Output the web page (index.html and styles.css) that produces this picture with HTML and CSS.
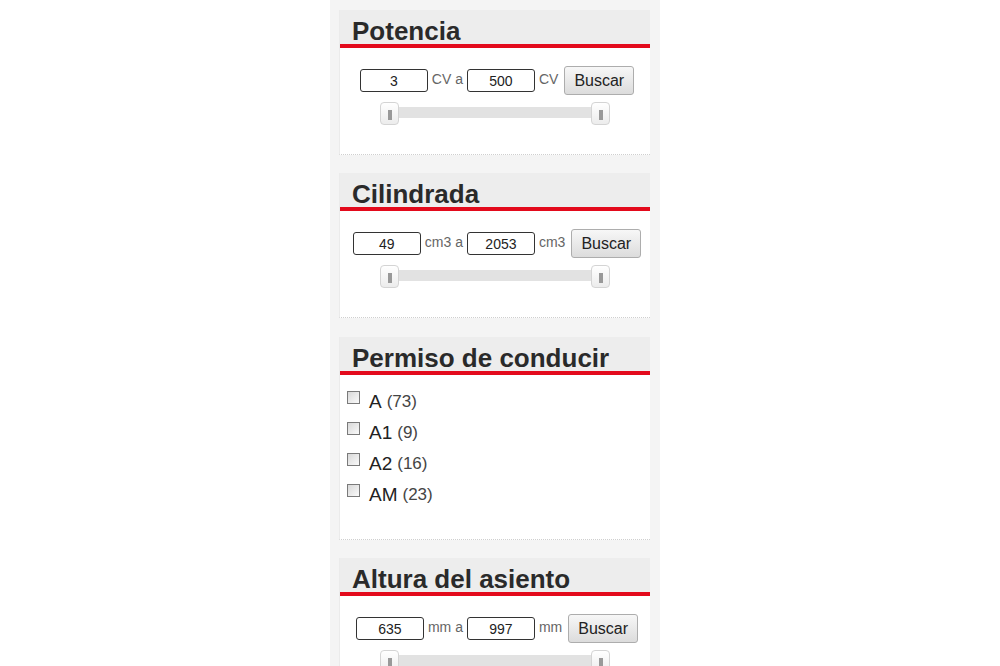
FILE: index.html
```html
<!DOCTYPE html>
<html lang="es">
<head>
    <meta charset="UTF-8">
    <meta name="viewport" content="width=device-width, initial-scale=1.0">
    <title>Filtros</title>
    <link rel="stylesheet" href="styles.css">
</head>
<body>
    <aside class="filtros">

        <!-- Potencia -->
        <section class="filtro">
            <h2>Potencia</h2>
            <div class="rango">
                <div class="rango-campos">
                    <input type="text" value="3">
                    <span class="unidad">CV a</span>
                    <input type="text" value="500">
                    <span class="unidad">CV</span>
                    <button type="button">Buscar</button>
                </div>
                <div class="deslizador">
                    <span class="tirador izq"><i></i></span>
                    <span class="tirador der"><i></i></span>
                </div>
            </div>
        </section>

        <!-- Cilindrada -->
        <section class="filtro">
            <h2>Cilindrada</h2>
            <div class="rango">
                <div class="rango-campos">
                    <input type="text" value="49">
                    <span class="unidad">cm3 a</span>
                    <input type="text" value="2053">
                    <span class="unidad">cm3</span>
                    <button type="button">Buscar</button>
                </div>
                <div class="deslizador">
                    <span class="tirador izq"><i></i></span>
                    <span class="tirador der"><i></i></span>
                </div>
            </div>
        </section>

        <!-- Permiso -->
        <section class="filtro filtro-permiso">
            <h2>Permiso de conducir</h2>
            <ul class="opciones">
                <li><label><input type="checkbox">A<span class="cuenta">(73)</span></label></li>
                <li><label><input type="checkbox">A1<span class="cuenta">(9)</span></label></li>
                <li><label><input type="checkbox">A2<span class="cuenta">(16)</span></label></li>
                <li><label><input type="checkbox">AM<span class="cuenta">(23)</span></label></li>
            </ul>
        </section>

        <!-- Altura del asiento -->
        <section class="filtro">
            <h2>Altura del asiento</h2>
            <div class="rango">
                <div class="rango-campos">
                    <input type="text" value="635">
                    <span class="unidad">mm a</span>
                    <input type="text" value="997">
                    <span class="unidad">mm</span>
                    <button type="button">Buscar</button>
                </div>
                <div class="deslizador">
                    <span class="tirador izq"><i></i></span>
                    <span class="tirador der"><i></i></span>
                </div>
            </div>
        </section>

    </aside>
</body>
</html>
```

FILE: styles.css
```css
/* Basis */
body {
    margin: 0;
    padding: 0;
    background: #fff;
    font-family: "Liberation Sans", Arial, sans-serif;
    color: #222;
}

.filtros {
    width: 330px;
    min-height: 100vh;
    margin-left: 330px;
    padding: 10px 0 0 0;
    box-sizing: border-box;
    background: #f4f4f4;
    overflow: hidden;
}

.filtro {
    width: 311px;
    margin: 0 10px 18px 9px;
    background: #fff;
    border-left: 1px solid #ebebeb;
    border-bottom: 1px dotted #cfcfcf;
    box-sizing: border-box;
}

.filtro-permiso {
    margin-top: 19px;
}

.filtro h2 {
    margin: 0;
    height: 38px;
    padding: 8px 0 0 12px;
    box-sizing: border-box;
    font-size: 26px;
    line-height: 26px;
    font-weight: bold;
    color: #2a2a2a;
    background: #ededed;
    border-bottom: 4px solid #e30a1c;
}

/* Rango met invoervelden */
.rango {
    padding: 18px 0 36px 0;
}

.rango-campos {
    display: flex;
    justify-content: center;
    align-items: center;
    gap: 4px;
    height: 29px;
    padding-left: 4px;
}

.rango-campos input {
    width: 68px;
    height: 23px;
    box-sizing: border-box;
    border: 1px solid #333;
    border-radius: 3px;
    padding: 0;
    text-align: center;
    font-family: "Liberation Sans", Arial, sans-serif;
    font-size: 14px;
    color: #222;
}

.unidad {
    align-self: flex-start;
    margin-top: 5px;
    font-size: 14px;
    line-height: 16px;
    color: #666;
}

.rango-campos button {
    height: 29px;
    margin-left: 2px;
    padding: 0 9px;
    border: 1px solid #adadad;
    border-radius: 3px;
    background: linear-gradient(#f7f7f7, #dcdcdc);
    font-family: "Liberation Sans", Arial, sans-serif;
    font-size: 16px;
    color: #222;
    cursor: pointer;
}

.deslizador {
    position: relative;
    width: 230px;
    height: 11px;
    margin: 12px auto 0 auto;
    background: #e2e2e2;
}

.tirador {
    position: absolute;
    top: -5px;
    width: 19px;
    height: 23px;
    box-sizing: border-box;
    border: 1px solid #d4d4d4;
    border-radius: 4px;
    background: linear-gradient(#ffffff, #ececec);
    display: flex;
    justify-content: center;
    align-items: center;
}

.tirador.izq {
    left: 0;
}

.tirador.der {
    right: 0;
}

.tirador i {
    display: block;
    width: 4px;
    height: 10px;
    margin-top: 2px;
    background: #999;
}

/* Checkbox lijst */
.opciones {
    list-style: none;
    margin: 0;
    padding: 11px 0 29px 7px;
}

.opciones li {
    height: 31px;
}

.opciones label {
    display: flex;
    align-items: flex-start;
    font-size: 19px;
    line-height: 31px;
    color: #222;
}

.opciones input {
    -webkit-appearance: none;
    appearance: none;
    width: 13px;
    height: 13px;
    margin: 5px 9px 0 0;
    border: 1px solid #7a7a7a;
    background: linear-gradient(135deg, #d8d8d8, #fafafa);
    box-sizing: border-box;
}

.cuenta {
    margin-left: 5px;
    font-size: 17px;
    color: #444;
}
```
